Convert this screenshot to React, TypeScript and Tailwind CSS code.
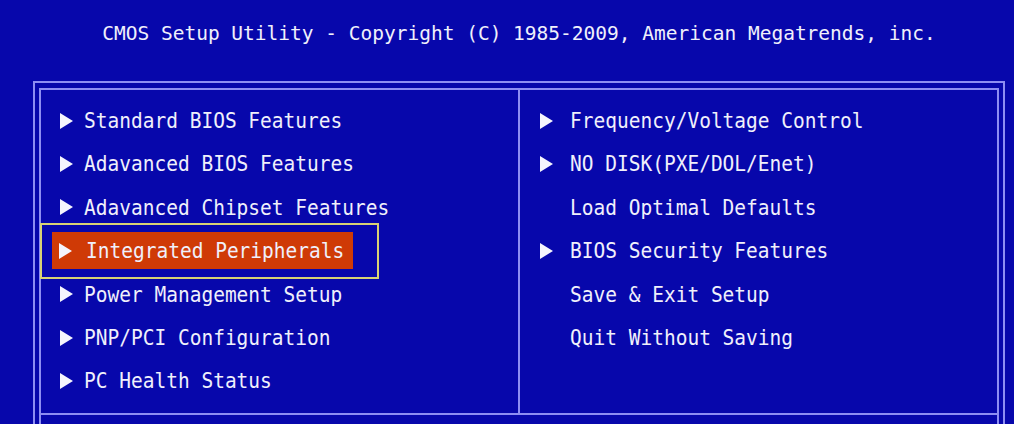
const leftItems = [
  { label: "Standard BIOS Features", arrow: true },
  { label: "Adavanced BIOS Features", arrow: true },
  { label: "Adavanced Chipset Features", arrow: true },
  { label: "Integrated Peripherals", arrow: true, active: true },
  { label: "Power Management Setup", arrow: true },
  { label: "PNP/PCI Configuration", arrow: true },
  { label: "PC Health Status", arrow: true },
];

const rightItems = [
  { label: "Frequency/Voltage Control", arrow: true },
  { label: "NO DISK(PXE/DOL/Enet)", arrow: true },
  { label: "Load Optimal Defaults", arrow: false },
  { label: "BIOS Security Features", arrow: true },
  { label: "Save & Exit Setup", arrow: false },
  { label: "Quit Without Saving", arrow: false },
];

function Arrow() {
  return (
    <svg width="13" height="16" viewBox="0 0 13 16" className="shrink-0">
      <polygon points="0,0 13,8 0,16" fill="#f4f4fd" />
    </svg>
  );
}

export default function App() {
  return (
    <div className="w-[1014px] h-[424px] overflow-hidden bg-[#0707ab] text-[#f0f0fb] font-['DejaVu_Sans_Mono','Liberation_Mono',monospace] text-[19.5px]">
      {/* Title */}
      <div className="h-[81px] pl-[33px] pr-[9px] pt-[22px] text-center leading-[24px] whitespace-pre">
        CMOS Setup Utility - Copyright (C) 1985-2009, American Megatrends, inc.
      </div>

      {/* Outer frame */}
      <div className="ml-[33px] mr-[9px] border-2 border-[#8e8ef2] px-[4px] pt-[5px] h-[400px]">
        <div className="border-2 border-[#8e8ef2] h-full">
          <div className="flex border-b-2 border-[#8e8ef2]">
            {/* Left column */}
            <div className="w-[479px] border-r-2 border-[#8e8ef2] pt-[9px] pb-[10px]">
              {leftItems.map((item) =>
                item.active ? (
                  <div key={item.label} className="relative h-[43.4px] flex items-center">
                    <div className="absolute left-[-1px] top-[-6px] w-[339px] h-[56px] border-2 border-[#d8d274]" />
                    <div className="ml-[11px] w-[301px] h-[37px] bg-[#cf3a06] flex items-center pl-[7px] gap-[14px] whitespace-pre">
                      <Arrow />
                      <span className="scale-y-110">{item.label}</span>
                    </div>
                  </div>
                ) : (
                  <div key={item.label} className="h-[43.4px] flex items-center pl-[19px] gap-[11px] whitespace-pre">
                    <Arrow />
                    <span className="scale-y-110">{item.label}</span>
                  </div>
                )
              )}
            </div>

            {/* Right column */}
            <div className="flex-1 pt-[9px] pb-[10px]">
              {rightItems.map((item) => (
                <div key={item.label} className="h-[43.4px] flex items-center pl-[20px] whitespace-pre">
                  <div className="w-[30px] shrink-0">{item.arrow && <Arrow />}</div>
                  <span className="scale-y-110">{item.label}</span>
                </div>
              ))}
            </div>
          </div>
        </div>
      </div>
    </div>
  );
}
